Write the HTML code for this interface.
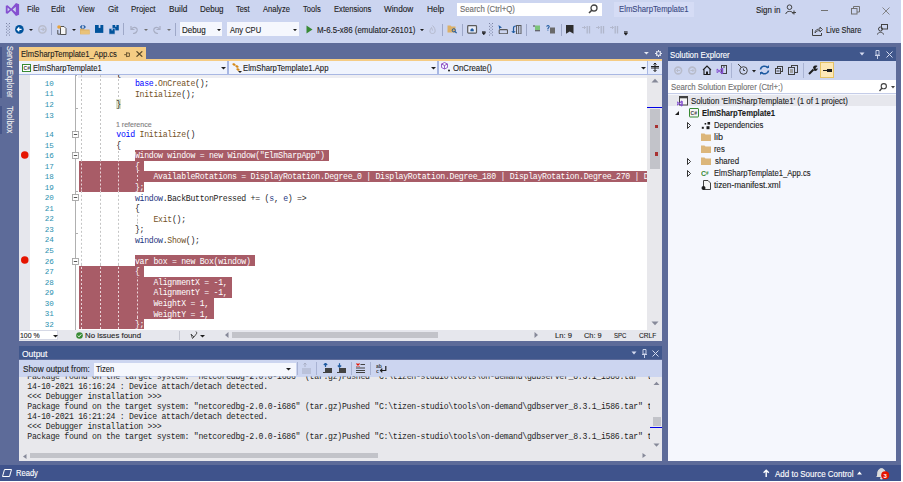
<!DOCTYPE html>
<html><head><meta charset="utf-8"><style>
html,body{margin:0;padding:0;width:903px;height:482px;overflow:hidden;background:#ffffff;}
div,svg{position:absolute;}
div{box-sizing:border-box;}
.t{position:absolute;font-family:"Liberation Sans",sans-serif;white-space:pre;line-height:12px;-webkit-text-stroke:0.12px currentColor;}
.m{position:absolute;font-family:"Liberation Mono",monospace;white-space:pre;line-height:12px;}
</style></head><body>
<div style="left:0px;top:0px;width:901px;height:43px;background:#ccd5f0;"></div>
<div style="left:0px;top:43px;width:901px;height:422px;background:#5d6b99;"></div>
<div style="left:0px;top:465px;width:901px;height:16px;background:#3f538c;"></div>
<svg style="position:absolute;left:0px;top:0px;" width="22" height="20" viewBox="0 0 22 20"><path d="M5.8 5.8 L7.6 5.2 L11.2 8.6 L16 3 L19.1 4.3 V14.7 L16 16 L11.2 10.4 L7.6 13.8 L5.8 13.2 Z M7.6 7.6 V11.4 L9.8 9.5 Z M12.6 9.5 L15.8 12.2 V6.8 Z" fill="#8550d0" fill-rule="evenodd"/></svg>
<div class="t" style="left:26.67px;top:3.22px;font-size:8.9px;color:#1e1e1e;transform-origin:0 0;transform:scaleX(0.8823);">File</div>
<div class="t" style="left:51.36px;top:3.22px;font-size:8.9px;color:#1e1e1e;transform-origin:0 0;transform:scaleX(0.8934);">Edit</div>
<div class="t" style="left:78.46px;top:3.22px;font-size:8.9px;color:#1e1e1e;transform-origin:0 0;transform:scaleX(0.8643);">View</div>
<div class="t" style="left:107.99px;top:3.22px;font-size:8.9px;color:#1e1e1e;transform-origin:0 0;transform:scaleX(0.9118);">Git</div>
<div class="t" style="left:131.27px;top:3.22px;font-size:8.9px;color:#1e1e1e;transform-origin:0 0;transform:scaleX(0.8877);">Project</div>
<div class="t" style="left:168.74px;top:3.22px;font-size:8.9px;color:#1e1e1e;transform-origin:0 0;transform:scaleX(0.9323);">Build</div>
<div class="t" style="left:200.06px;top:3.22px;font-size:8.9px;color:#1e1e1e;transform-origin:0 0;transform:scaleX(0.9013);">Debug</div>
<div class="t" style="left:236.35px;top:3.22px;font-size:8.9px;color:#1e1e1e;transform-origin:0 0;transform:scaleX(0.8341);">Test</div>
<div class="t" style="left:263.30px;top:3.22px;font-size:8.9px;color:#1e1e1e;transform-origin:0 0;transform:scaleX(0.8503);">Analyze</div>
<div class="t" style="left:303.45px;top:3.22px;font-size:8.9px;color:#1e1e1e;transform-origin:0 0;transform:scaleX(0.8526);">Tools</div>
<div class="t" style="left:333.99px;top:3.22px;font-size:8.9px;color:#1e1e1e;transform-origin:0 0;transform:scaleX(0.8612);">Extensions</div>
<div class="t" style="left:384.46px;top:3.22px;font-size:8.9px;color:#1e1e1e;transform-origin:0 0;transform:scaleX(0.9292);">Window</div>
<div class="t" style="left:426.53px;top:3.22px;font-size:8.9px;color:#1e1e1e;transform-origin:0 0;transform:scaleX(0.9407);">Help</div>
<div style="left:457px;top:2.6px;width:144.6px;height:13.5px;background:#ffffff;"></div>
<div class="t" style="left:459.65px;top:3.35px;font-size:8.5px;color:#6d6d6d;transform-origin:0 0;transform:scaleX(0.9181);">Search (Ctrl+Q)</div>
<svg style="position:absolute;left:588px;top:4px;" width="10" height="10" viewBox="0 0 10 10"><circle cx="6" cy="4" r="3" fill="none" stroke="#424242" stroke-width="1.3"/><path d="M4 6 L1 9" stroke="#424242" stroke-width="1.6"/></svg>
<div style="left:614.3px;top:1.7px;width:79.4px;height:15.3px;background:#d5dcf5;"></div>
<div class="t" style="left:618.98px;top:3.35px;font-size:8.5px;color:#3b4a84;transform-origin:0 0;transform:scaleX(0.9102);">ElmSharpTemplate1</div>
<div class="t" style="left:755.84px;top:3.65px;font-size:8.5px;color:#1e1e1e;transform-origin:0 0;transform:scaleX(0.9372);">Sign in</div>
<svg style="position:absolute;left:785px;top:4px;" width="12" height="11" viewBox="0 0 12 11"><circle cx="4.5" cy="3.2" r="2.3" fill="none" stroke="#424242" stroke-width="1"/><path d="M0.8 10 C1 6.5 8 6.5 8.2 10" fill="none" stroke="#424242" stroke-width="1"/><path d="M9 6.5 V10.5 M7 8.5 H11" stroke="#424242" stroke-width="1"/></svg>
<div style="left:821px;top:10px;width:7.4px;height:1px;background:#717171;"></div>
<svg style="position:absolute;left:851px;top:6px;" width="9" height="9" viewBox="0 0 9 9"><rect x="0.5" y="2.5" width="5.5" height="5.5" fill="none" stroke="#717171"/><path d="M2.5 2.5 V0.5 H8.5 V6 H6" fill="none" stroke="#717171"/></svg>
<svg style="position:absolute;left:882px;top:7px;" width="8" height="8" viewBox="0 0 8 8"><path d="M0.5 0.5 L7.5 7.5 M7.5 0.5 L0.5 7.5" stroke="#7a7a7a" stroke-width="0.9"/></svg>
<svg style="position:absolute;left:5.8px;top:23px;" width="4" height="13" viewBox="0 0 4 13"><rect x="0" y="0.00" width="1" height="1" fill="#7c84a4"/><rect x="3" y="0.00" width="1" height="1" fill="#7c84a4"/><rect x="1.5" y="1.45" width="1" height="1" fill="#7c84a4"/><rect x="0" y="2.90" width="1" height="1" fill="#7c84a4"/><rect x="3" y="2.90" width="1" height="1" fill="#7c84a4"/><rect x="1.5" y="4.35" width="1" height="1" fill="#7c84a4"/><rect x="0" y="5.80" width="1" height="1" fill="#7c84a4"/><rect x="3" y="5.80" width="1" height="1" fill="#7c84a4"/><rect x="1.5" y="7.25" width="1" height="1" fill="#7c84a4"/><rect x="0" y="8.70" width="1" height="1" fill="#7c84a4"/><rect x="3" y="8.70" width="1" height="1" fill="#7c84a4"/><rect x="1.5" y="10.15" width="1" height="1" fill="#7c84a4"/><rect x="0" y="11.60" width="1" height="1" fill="#7c84a4"/><rect x="3" y="11.60" width="1" height="1" fill="#7c84a4"/></svg>
<svg style="position:absolute;left:15px;top:25px;" width="9" height="9" viewBox="0 0 9 9"><circle cx="4.4" cy="4.4" r="4.3" fill="#00539c"/><path d="M6.6 4.4 H2.4 M4.3 2.5 L2.4 4.4 L4.3 6.3" fill="none" stroke="#ffffff" stroke-width="1.3"/></svg>
<svg style="position:absolute;left:28.5px;top:28.5px;" width="4" height="2" viewBox="0 0 4 2"><path d="M0 0 H4 L2 2 Z" fill="#1e1e1e"/></svg>
<svg style="position:absolute;left:37.5px;top:25px;" width="9" height="9" viewBox="0 0 9 9"><circle cx="4.4" cy="4.4" r="3.6" fill="none" stroke="#b8bccb" stroke-width="1.6"/><path d="M2.5 4.4 H6.2 M4.6 2.7 L6.3 4.4 L4.6 6.1" fill="none" stroke="#b8bccb" stroke-width="1.1"/></svg>
<div style="left:51px;top:23px;width:0.9px;height:12.4px;background:#9ea8c8;"></div>
<svg style="position:absolute;left:57px;top:24.5px;" width="10" height="10" viewBox="0 0 10 10"><path d="M3.5 1.5 H7 L9 3.5 V9.5 H3.5 Z" fill="#f6f6f6" stroke="#424242" stroke-width="0.9"/><path d="M0.8 5 V9.2 H3.5" fill="none" stroke="#424242" stroke-width="0.9"/><circle cx="2" cy="2" r="1.8" fill="#e8a33d"/></svg>
<svg style="position:absolute;left:71.8px;top:28.6px;" width="4" height="2" viewBox="0 0 4 2"><path d="M0 0 H4 L2 2 Z" fill="#1e1e1e"/></svg>
<svg style="position:absolute;left:80px;top:25px;" width="10" height="10" viewBox="0 0 10 10"><path d="M0 3.5 H3.5 L4.5 4.5 H9.6 V9.2 H0 Z" fill="#dcb067"/><path d="M0.5 5.5 H9.6 V9.2 H0.5 Z" fill="#e9c27a"/><path d="M2.3 0.3 L0.6 2 L2.3 3.7" fill="none" stroke="#1e5aa0" stroke-width="1.1"/><path d="M3.5 0.3 L5.2 2 L3.5 3.7" fill="none" stroke="#1e5aa0" stroke-width="1.1"/></svg>
<svg style="position:absolute;left:95px;top:25.4px;" width="9" height="8" viewBox="0 0 9 8"><path d="M0 0 H8.3 V7.9 H0 Z" fill="#00539c"/><rect x="3.7" y="0" width="1.7" height="2.9" fill="#ccd5f0"/></svg>
<svg style="position:absolute;left:109px;top:24.6px;" width="10" height="10" viewBox="0 0 10 10"><path d="M3.5 0 H9.8 V5.4 H3.5 Z" fill="#00539c"/><path d="M0 3.4 H6 V9.2 H0 Z" fill="#00539c" stroke="#ccd5f0" stroke-width="0.6"/><rect x="6.2" y="0" width="1.2" height="1.8" fill="#ccd5f0"/><rect x="2.5" y="3.6" width="1.2" height="1.8" fill="#ccd5f0"/></svg>
<div style="left:123.2px;top:23px;width:0.9px;height:12.4px;background:#9ea8c8;"></div>
<svg style="position:absolute;left:129px;top:25px;" width="9" height="9" viewBox="0 0 9 9"><path d="M2 1 V4.5 H5.5" fill="none" stroke="#a8aec4" stroke-width="1.2"/><path d="M2.5 4 C5 1 9 2.5 8 6 C7.5 7.5 6 8.5 4 8.5" fill="none" stroke="#a8aec4" stroke-width="1.2"/></svg>
<svg style="position:absolute;left:144px;top:28.6px;" width="4" height="2" viewBox="0 0 4 2"><path d="M0 0 H4 L2 2 Z" fill="#707070"/></svg>
<svg style="position:absolute;left:153px;top:25px;" width="9" height="9" viewBox="0 0 9 9"><path d="M7 1 V4.5 H3.5" fill="none" stroke="#a8aec4" stroke-width="1.2"/><path d="M6.5 4 C4 1 0 2.5 1 6 C1.5 7.5 3 8.5 5 8.5" fill="none" stroke="#a8aec4" stroke-width="1.2"/></svg>
<svg style="position:absolute;left:167px;top:28.6px;" width="4" height="2" viewBox="0 0 4 2"><path d="M0 0 H4 L2 2 Z" fill="#707070"/></svg>
<div style="left:174.8px;top:23px;width:0.9px;height:13px;background:#9ea8c8;"></div>
<div style="left:180px;top:22.3px;width:42px;height:14px;background:#f5f7fd;"></div>
<div class="t" style="left:182.06px;top:23.65px;font-size:8.5px;color:#1e1e1e;transform-origin:0 0;transform:scaleX(0.9479);">Debug</div>
<svg style="position:absolute;left:216.5px;top:28.5px;" width="4" height="2.5" viewBox="0 0 4 2.5"><path d="M0 0 H4 L2 2.2 Z" fill="#1e1e1e"/></svg>
<div style="left:227px;top:22.3px;width:72px;height:14px;background:#f5f7fd;"></div>
<div class="t" style="left:229.70px;top:23.65px;font-size:8.5px;color:#1e1e1e;transform-origin:0 0;transform:scaleX(0.8893);">Any CPU</div>
<svg style="position:absolute;left:292.8px;top:28.5px;" width="4" height="2.5" viewBox="0 0 4 2.5"><path d="M0 0 H4 L2 2.2 Z" fill="#1e1e1e"/></svg>
<svg style="position:absolute;left:306px;top:25px;" width="7" height="9" viewBox="0 0 7 9"><path d="M0.5 0.5 L6.5 4.5 L0.5 8.5 Z" fill="#388a34"/></svg>
<div class="t" style="left:316.97px;top:23.65px;font-size:8.5px;color:#1e1e1e;transform-origin:0 0;transform:scaleX(0.9303);">M-6.5-x86 (emulator-26101)</div>
<svg style="position:absolute;left:419.5px;top:28.5px;" width="4" height="2.5" viewBox="0 0 4 2.5"><path d="M0 0 H4 L2 2.2 Z" fill="#1e1e1e"/></svg>
<svg style="position:absolute;left:429.3px;top:24.5px;" width="7" height="10" viewBox="0 0 7 10"><path d="M3.5 0.5 C5.5 2.5 6.5 4.5 6 7 C5.5 9 1.5 9 1 7 C0.5 5 2 3.5 2.5 2.5 C3 4 3.5 4.5 3.5 5.5" fill="none" stroke="#b4b9cc" stroke-width="1"/></svg>
<div style="left:441.8px;top:23.5px;width:0.9px;height:12.5px;background:#9ea8c8;"></div>
<svg style="position:absolute;left:447px;top:25px;" width="11" height="9" viewBox="0 0 11 9"><path d="M0.5 0.5 H3.5 L4.5 1.5 H8.5 V7.5 H0.5 Z" fill="#dcb067"/><circle cx="6.8" cy="5.3" r="1.6" fill="#dcb067" stroke="#1e5aa0" stroke-width="1"/><path d="M7.9 6.4 L9.6 8.2" stroke="#1e5aa0" stroke-width="1.2"/></svg>
<div style="left:461.5px;top:23.5px;width:0.9px;height:12.5px;background:#9ea8c8;"></div>
<svg style="position:absolute;left:466.8px;top:24.8px;" width="11" height="9" viewBox="0 0 11 9"><rect x="0.7" y="0.7" width="8.8" height="7.4" rx="0.8" fill="#e8ecf8" stroke="#5a5a5a" stroke-width="1.2"/><path d="M3 5.3 L5.1 3 L7.2 5.3 Z" fill="#1e5aa0"/><rect x="3.5" y="4.8" width="3.2" height="1.5" fill="#1e5aa0"/></svg>
<svg style="position:absolute;left:482px;top:31px;" width="4" height="4" viewBox="0 0 4 4"><path d="M0 0.4 H3.6 M0 1.6 H3.6 L1.8 3.8 Z" stroke="#1e1e1e" stroke-width="0.7" fill="#1e1e1e"/></svg>
<svg style="position:absolute;left:489px;top:23px;" width="4" height="13" viewBox="0 0 4 13"><rect x="0" y="0.00" width="1" height="1" fill="#7c84a4"/><rect x="3" y="0.00" width="1" height="1" fill="#7c84a4"/><rect x="1.5" y="1.45" width="1" height="1" fill="#7c84a4"/><rect x="0" y="2.90" width="1" height="1" fill="#7c84a4"/><rect x="3" y="2.90" width="1" height="1" fill="#7c84a4"/><rect x="1.5" y="4.35" width="1" height="1" fill="#7c84a4"/><rect x="0" y="5.80" width="1" height="1" fill="#7c84a4"/><rect x="3" y="5.80" width="1" height="1" fill="#7c84a4"/><rect x="1.5" y="7.25" width="1" height="1" fill="#7c84a4"/><rect x="0" y="8.70" width="1" height="1" fill="#7c84a4"/><rect x="3" y="8.70" width="1" height="1" fill="#7c84a4"/><rect x="1.5" y="10.15" width="1" height="1" fill="#7c84a4"/><rect x="0" y="11.60" width="1" height="1" fill="#7c84a4"/><rect x="3" y="11.60" width="1" height="1" fill="#7c84a4"/></svg>
<svg style="position:absolute;left:497.5px;top:24.5px;" width="10" height="9" viewBox="0 0 10 9"><path d="M0.5 0 L4 2.6 L2.2 3 L1.4 4.6 Z" fill="#1e5aa0"/><rect x="1.2" y="4.6" width="8.3" height="4.2" rx="1" fill="none" stroke="#5a5a5a" stroke-width="1.1"/></svg>
<svg style="position:absolute;left:511px;top:24.5px;" width="11" height="9.5" viewBox="0 0 11 9.5"><path d="M2.5 8 V3 C2.5 1.5 3.5 1 5 1" fill="none" stroke="#1e5aa0" stroke-width="1.2"/><path d="M0.8 6 L2.5 8 L4.2 6" fill="none" stroke="#1e5aa0" stroke-width="1"/><rect x="5.5" y="0.5" width="4.5" height="8.5" fill="none" stroke="#5a5a5a" stroke-width="1"/><path d="M7.7 0.5 V9" stroke="#5a5a5a" stroke-width="1"/></svg>
<div style="left:526px;top:23.5px;width:0.9px;height:12.5px;background:#9ea8c8;"></div>
<svg style="position:absolute;left:532.5px;top:25px;" width="8" height="8" viewBox="0 0 8 8"><rect x="2" y="0.5" width="5" height="4.5" fill="#7cc47a"/><path d="M0 1 H2 M2 5.8 H7" stroke="#424242" stroke-width="1.1"/></svg>
<svg style="position:absolute;left:546px;top:24.5px;" width="10" height="9" viewBox="0 0 10 9"><path d="M0.8 1.8 C0.8 0.2 3.2 0.2 3.2 1.6 C3.2 2.8 1.8 2.8 1.8 4" fill="none" stroke="#1e5aa0" stroke-width="1.1"/><rect x="1.4" y="4.6" width="1" height="1" fill="#1e5aa0"/><rect x="4" y="2.5" width="5" height="6" fill="#6a6a6a"/></svg>
<div style="left:560.5px;top:23.5px;width:0.9px;height:12.5px;background:#9ea8c8;"></div>
<svg style="position:absolute;left:566.3px;top:24.7px;" width="8" height="9" viewBox="0 0 8 9"><path d="M0 0 H7.5 V8.7 L3.75 6.4 L0 8.7 Z" fill="#2d2d2d"/></svg>
<svg style="position:absolute;left:582px;top:24.5px;" width="9" height="9" viewBox="0 0 9 9"><path d="M5.2 1 V8.5 M7.5 1 V8.5" stroke="#b0b6ca" stroke-width="1.3"/><path d="M0 2.5 H3.5 M2 1 L3.5 2.5 L2 4" fill="none" stroke="#b0b6ca" stroke-width="0.9"/></svg>
<svg style="position:absolute;left:596px;top:24.5px;" width="9" height="9" viewBox="0 0 9 9"><path d="M5.2 1 V8.5 M7.5 1 V8.5" stroke="#b0b6ca" stroke-width="1.3"/><path d="M0 2.5 H3.5 M2 1 L3.5 2.5 L2 4" fill="none" stroke="#b0b6ca" stroke-width="0.9"/></svg>
<svg style="position:absolute;left:609.5px;top:24.5px;" width="9" height="9" viewBox="0 0 9 9"><path d="M5.2 1 V8.5 M7.5 1 V8.5" stroke="#b0b6ca" stroke-width="1.3"/><path d="M0 2.5 H3.5 M2 1 L3.5 2.5 L2 4" fill="none" stroke="#b0b6ca" stroke-width="0.9"/></svg>
<svg style="position:absolute;left:624px;top:30.5px;" width="4" height="5" viewBox="0 0 4 5"><path d="M0 0.4 H3.6 M0 1.8 H3.6 L1.8 4.2 Z" stroke="#1e1e1e" stroke-width="0.7" fill="#1e1e1e"/></svg>
<svg style="position:absolute;left:812px;top:26px;" width="11" height="10" viewBox="0 0 11 10"><path d="M0.5 3 V9.5 H9.5 V7" fill="none" stroke="#424242"/><path d="M3 7 C3 4 5 3 8 3 V1 L10.5 3.5 L8 6 V4.5 C6 4.5 4.5 5 3 7 Z" fill="none" stroke="#424242" stroke-width="0.9"/></svg>
<div class="t" style="left:826.01px;top:24.25px;font-size:8.5px;color:#1e1e1e;transform-origin:0 0;transform:scaleX(0.8685);">Live Share</div>
<svg style="position:absolute;left:877px;top:24px;" width="11" height="11" viewBox="0 0 11 11"><rect x="4.5" y="0.5" width="6" height="4.5" fill="none" stroke="#424242"/><circle cx="3.5" cy="5" r="2" fill="none" stroke="#424242"/><path d="M0.5 10.5 C1 7.5 6 7.5 6.5 10.5" fill="none" stroke="#424242"/></svg>
<div style="left:0px;top:46.7px;width:2px;height:51.3px;background:#46568a;"></div>
<div style="left:0px;top:106px;width:2px;height:28px;background:#46568a;"></div>
<div class="t" style="left:14.2px;top:46.36px;font-size:8.9px;color:#f0f0f0;transform-origin:0 0;transform:rotate(90deg) scaleX(0.8366);line-height:9px;">Server Explorer</div>
<div class="t" style="left:14.2px;top:105.84px;font-size:8.9px;color:#f0f0f0;transform-origin:0 0;transform:rotate(90deg) scaleX(0.8883);line-height:9px;">Toolbox</div>
<div style="left:19px;top:47px;width:127px;height:13px;background:#f5cc84;"></div>
<div class="t" style="left:21.39px;top:47.52px;font-size:8.9px;color:#1e1e1e;transform-origin:0 0;transform:scaleX(0.8563);">ElmSharpTemplate1_App.cs</div>
<svg style="position:absolute;left:124px;top:51.5px;" width="7" height="6" viewBox="0 0 7 6"><path d="M0.2 2.7 H2.5 M2.6 0.3 V5.1 M2.6 1 H5.4 V4.4 H2.6" fill="none" stroke="#6b5530" stroke-width="1"/></svg>
<svg style="position:absolute;left:136px;top:51px;" width="7" height="6" viewBox="0 0 7 6"><path d="M0.5 0.3 L6.3 5.7 M6.3 0.3 L0.5 5.7" stroke="#5b4a2a" stroke-width="1.2"/></svg>
<div style="left:19px;top:59px;width:643px;height:1.6px;background:#f5cc84;"></div>
<div style="left:19px;top:60.6px;width:643px;height:13.6px;background:#f0f4fd;"></div>
<div style="left:19px;top:74.1px;width:643px;height:0.9px;background:#a9b8e3;"></div>
<div style="left:227.2px;top:60.6px;width:2px;height:14px;background:#a9b8e3;"></div>
<div style="left:436.9px;top:60.6px;width:2px;height:14px;background:#a9b8e3;"></div>
<div style="left:647px;top:60.6px;width:1px;height:14px;background:#a9b8e3;"></div>
<div style="left:648px;top:60.6px;width:14px;height:13.5px;background:#e4eafb;"></div>
<svg style="position:absolute;left:22px;top:63.5px;" width="9" height="8" viewBox="0 0 9 8"><rect x="0.5" y="0.5" width="8" height="7" fill="#ffffff" stroke="#388a34" stroke-width="1"/><text x="1.6" y="6" font-family="Liberation Sans" font-size="5" font-weight="bold" fill="#424242">C#</text></svg>
<div class="t" style="left:32.69px;top:62.15px;font-size:8.5px;color:#1e1e1e;transform-origin:0 0;transform:scaleX(0.8969);">ElmSharpTemplate1</div>
<svg style="position:absolute;left:221px;top:67px;" width="5" height="3" viewBox="0 0 5 3"><path d="M0 0 H5 L2.5 2.5 Z" fill="#1e1e1e"/></svg>
<svg style="position:absolute;left:231px;top:62.5px;" width="11" height="10" viewBox="0 0 11 10"><path d="M1 1 L3 0 L5 2 L3 3 Z M4 3 L6 2 L8 4 L6 5 Z M5 6 L7 5 L9 7 L7 8 Z" fill="#d68a1a"/><path d="M7 8 L9 10 L11 8 Z" fill="#1e1e1e"/></svg>
<div class="t" style="left:243.28px;top:62.15px;font-size:8.5px;color:#1e1e1e;transform-origin:0 0;transform:scaleX(0.9087);">ElmSharpTemplate1.App</div>
<svg style="position:absolute;left:430.5px;top:67px;" width="5" height="3" viewBox="0 0 5 3"><path d="M0 0 H5 L2.5 2.5 Z" fill="#1e1e1e"/></svg>
<svg style="position:absolute;left:440.5px;top:62px;" width="9" height="10" viewBox="0 0 9 10"><path d="M3.5 0.5 L6.5 2 V5.5 L3.5 7 L0.5 5.5 V2 Z M0.5 2 L3.5 3.5 L6.5 2 M3.5 3.5 V7" fill="none" stroke="#8e4fc2" stroke-width="0.9"/><circle cx="8" cy="8.5" r="1" fill="#1e1e1e"/></svg>
<div class="t" style="left:452.65px;top:62.15px;font-size:8.5px;color:#1e1e1e;transform-origin:0 0;transform:scaleX(0.9133);">OnCreate()</div>
<svg style="position:absolute;left:641px;top:67px;" width="5" height="3" viewBox="0 0 5 3"><path d="M0 0 H5 L2.5 2.5 Z" fill="#1e1e1e"/></svg>
<svg style="position:absolute;left:651px;top:63px;" width="8" height="9" viewBox="0 0 8 9"><path d="M0 3.5 H8 M0 5 H8" stroke="#1e1e1e" stroke-width="1"/><path d="M4 0 V8.5 M2.5 1.5 L4 0 L5.5 1.5 M2.5 7 L4 8.5 L5.5 7" fill="none" stroke="#1e1e1e" stroke-width="1"/></svg>
<div style="left:19px;top:75px;width:628px;height:254.6px;background:#ffffff;"></div>
<div style="left:19px;top:75px;width:10.6px;height:254.6px;background:#e6e7ed;"></div>
<div style="left:78px;top:75px;width:569px;height:3px;background:#eeeef2;"></div>
<div style="left:75.3px;top:75px;width:0.9px;height:56.19999999999999px;background:#b0b0b0;"></div>
<div style="left:75.3px;top:75px;width:2px;height:0.9px;background:#b0b0b0;"></div>
<div style="left:134.9px;top:149.99px;width:194.59px;height:10.595px;background:#a85c67;"></div>
<div style="left:78.8px;top:160.53px;width:65.36px;height:10.595px;background:#a85c67;"></div>
<div style="left:78.8px;top:171.08px;width:568.2px;height:10.595px;background:#a85c67;"></div>
<div style="left:78.8px;top:181.62px;width:65.36px;height:10.595px;background:#a85c67;"></div>
<div style="left:134.9px;top:255.44px;width:120.46px;height:10.595px;background:#a85c67;"></div>
<div style="left:78.8px;top:265.99px;width:65.36px;height:10.595px;background:#a85c67;"></div>
<div style="left:78.8px;top:276.53px;width:153.39px;height:10.595px;background:#a85c67;"></div>
<div style="left:78.8px;top:287.08px;width:153.39px;height:10.595px;background:#a85c67;"></div>
<div style="left:78.8px;top:297.62px;width:134.86px;height:10.595px;background:#a85c67;"></div>
<div style="left:78.8px;top:308.16px;width:134.86px;height:10.595px;background:#a85c67;"></div>
<div style="left:78.8px;top:318.71px;width:65.36px;height:10.595px;background:#a85c67;"></div>
<div style="left:116px;top:99px;width:5px;height:10.2px;background:#dbe0cc;"></div>
<div style="left:81px;top:75px;width:1px;height:85.53px;background:repeating-linear-gradient(to bottom,#c4c4c4 0 2px,transparent 2px 4px);background-position:0 0.00px;"></div>
<div style="left:81px;top:160.53px;width:1px;height:31.64px;background:repeating-linear-gradient(to bottom,#ecd6da 0 2px,transparent 2px 4px);background-position:0 -1.53px;"></div>
<div style="left:81px;top:192.17px;width:1px;height:73.82px;background:repeating-linear-gradient(to bottom,#c4c4c4 0 2px,transparent 2px 4px);background-position:0 -1.17px;"></div>
<div style="left:81px;top:265.99px;width:1px;height:63.61px;background:repeating-linear-gradient(to bottom,#ecd6da 0 2px,transparent 2px 4px);background-position:0 -2.99px;"></div>
<div style="left:100px;top:75px;width:1px;height:85.53px;background:repeating-linear-gradient(to bottom,#c4c4c4 0 2px,transparent 2px 4px);background-position:0 0.00px;"></div>
<div style="left:100px;top:160.53px;width:1px;height:31.64px;background:repeating-linear-gradient(to bottom,#ecd6da 0 2px,transparent 2px 4px);background-position:0 -1.53px;"></div>
<div style="left:100px;top:192.17px;width:1px;height:73.82px;background:repeating-linear-gradient(to bottom,#c4c4c4 0 2px,transparent 2px 4px);background-position:0 -1.17px;"></div>
<div style="left:100px;top:265.99px;width:1px;height:63.61px;background:repeating-linear-gradient(to bottom,#ecd6da 0 2px,transparent 2px 4px);background-position:0 -2.99px;"></div>
<div style="left:118px;top:75px;width:1px;height:23.89px;background:repeating-linear-gradient(to bottom,#c4c4c4 0 2px,transparent 2px 4px);background-position:0 0.00px;"></div>
<div style="left:118px;top:149.99px;width:1px;height:10.54px;background:repeating-linear-gradient(to bottom,#c4c4c4 0 2px,transparent 2px 4px);background-position:0 -2.99px;"></div>
<div style="left:118px;top:160.53px;width:1px;height:31.64px;background:repeating-linear-gradient(to bottom,#ecd6da 0 2px,transparent 2px 4px);background-position:0 -1.53px;"></div>
<div style="left:118px;top:192.17px;width:1px;height:73.82px;background:repeating-linear-gradient(to bottom,#c4c4c4 0 2px,transparent 2px 4px);background-position:0 -1.17px;"></div>
<div style="left:118px;top:265.99px;width:1px;height:63.61px;background:repeating-linear-gradient(to bottom,#ecd6da 0 2px,transparent 2px 4px);background-position:0 -2.99px;"></div>
<div style="left:137px;top:171.08px;width:1px;height:10.54px;background:repeating-linear-gradient(to bottom,#ecd6da 0 2px,transparent 2px 4px);background-position:0 -0.08px;"></div>
<div style="left:137px;top:213.26px;width:1px;height:10.55px;background:repeating-linear-gradient(to bottom,#c4c4c4 0 2px,transparent 2px 4px);background-position:0 -2.26px;"></div>
<div style="left:137px;top:276.53px;width:1px;height:42.18px;background:repeating-linear-gradient(to bottom,#ecd6da 0 2px,transparent 2px 4px);background-position:0 -1.53px;"></div>
<div style="left:0;top:0;width:903px;height:482px;clip-path:inset(75px 256px 152.4px 19px)">
<div class="m" style="left:116.36px;top:67.66px;font-size:8.2px;letter-spacing:-0.287px;color:#1e1e1e;">{</div>
<div class="m" style="left:134.90px;top:78.21px;font-size:8.2px;letter-spacing:-0.287px;color:#0000ff;">base</div>
<div class="m" style="left:153.43px;top:78.21px;font-size:8.2px;letter-spacing:-0.287px;color:#1e1e1e;">.</div>
<div class="m" style="left:158.06px;top:78.21px;font-size:8.2px;letter-spacing:-0.287px;color:#74531f;">OnCreate</div>
<div class="m" style="left:195.12px;top:78.21px;font-size:8.2px;letter-spacing:-0.287px;color:#1e1e1e;">();</div>
<div class="m" style="left:134.90px;top:88.75px;font-size:8.2px;letter-spacing:-0.287px;color:#74531f;">Initialize</div>
<div class="m" style="left:181.23px;top:88.75px;font-size:8.2px;letter-spacing:-0.287px;color:#1e1e1e;">();</div>
<div class="m" style="left:116.36px;top:99.30px;font-size:8.2px;letter-spacing:-0.287px;color:#1e1e1e;">}</div>
<div class="m" style="left:116.36px;top:129.31px;font-size:8.2px;letter-spacing:-0.287px;color:#0000ff;">void</div>
<div class="m" style="left:139.53px;top:129.31px;font-size:8.2px;letter-spacing:-0.287px;color:#74531f;">Initialize</div>
<div class="m" style="left:185.86px;top:129.31px;font-size:8.2px;letter-spacing:-0.287px;color:#1e1e1e;">()</div>
<div class="m" style="left:116.36px;top:139.85px;font-size:8.2px;letter-spacing:-0.287px;color:#1e1e1e;">{</div>
<div class="m" style="left:134.90px;top:150.40px;font-size:8.2px;letter-spacing:-0.287px;color:#fff;">Window window = new Window(&quot;ElmSharpApp&quot;)</div>
<div class="m" style="left:134.90px;top:160.94px;font-size:8.2px;letter-spacing:-0.287px;color:#fff;">{</div>
<div class="m" style="left:153.43px;top:171.49px;font-size:8.2px;letter-spacing:-0.287px;color:#fff;">AvailableRotations = DisplayRotation.Degree_0 | DisplayRotation.Degree_180 | DisplayRotation.Degree_270 | DisplayRotation.Degree_90</div>
<div class="m" style="left:134.90px;top:182.03px;font-size:8.2px;letter-spacing:-0.287px;color:#fff;">};</div>
<div class="m" style="left:134.90px;top:192.58px;font-size:8.2px;letter-spacing:-0.287px;color:#1f377f;">window</div>
<div class="m" style="left:162.69px;top:192.58px;font-size:8.2px;letter-spacing:-0.287px;color:#1e1e1e;">.BackButtonPressed += (</div>
<div class="m" style="left:269.25px;top:192.58px;font-size:8.2px;letter-spacing:-0.287px;color:#1f377f;">s</div>
<div class="m" style="left:273.89px;top:192.58px;font-size:8.2px;letter-spacing:-0.287px;color:#1e1e1e;">, </div>
<div class="m" style="left:283.15px;top:192.58px;font-size:8.2px;letter-spacing:-0.287px;color:#1f377f;">e</div>
<div class="m" style="left:287.79px;top:192.58px;font-size:8.2px;letter-spacing:-0.287px;color:#1e1e1e;">) =&gt;</div>
<div class="m" style="left:134.90px;top:203.12px;font-size:8.2px;letter-spacing:-0.287px;color:#1e1e1e;">{</div>
<div class="m" style="left:153.43px;top:213.67px;font-size:8.2px;letter-spacing:-0.287px;color:#74531f;">Exit</div>
<div class="m" style="left:171.96px;top:213.67px;font-size:8.2px;letter-spacing:-0.287px;color:#1e1e1e;">();</div>
<div class="m" style="left:134.90px;top:224.22px;font-size:8.2px;letter-spacing:-0.287px;color:#1e1e1e;">};</div>
<div class="m" style="left:134.90px;top:234.76px;font-size:8.2px;letter-spacing:-0.287px;color:#1f377f;">window</div>
<div class="m" style="left:162.69px;top:234.76px;font-size:8.2px;letter-spacing:-0.287px;color:#1e1e1e;">.</div>
<div class="m" style="left:167.33px;top:234.76px;font-size:8.2px;letter-spacing:-0.287px;color:#74531f;">Show</div>
<div class="m" style="left:185.86px;top:234.76px;font-size:8.2px;letter-spacing:-0.287px;color:#1e1e1e;">();</div>
<div class="m" style="left:134.90px;top:255.85px;font-size:8.2px;letter-spacing:-0.287px;color:#fff;">var box = new Box(window)</div>
<div class="m" style="left:134.90px;top:266.40px;font-size:8.2px;letter-spacing:-0.287px;color:#fff;">{</div>
<div class="m" style="left:153.43px;top:276.94px;font-size:8.2px;letter-spacing:-0.287px;color:#fff;">AlignmentX = -1,</div>
<div class="m" style="left:153.43px;top:287.49px;font-size:8.2px;letter-spacing:-0.287px;color:#fff;">AlignmentY = -1,</div>
<div class="m" style="left:153.43px;top:298.03px;font-size:8.2px;letter-spacing:-0.287px;color:#fff;">WeightX = 1,</div>
<div class="m" style="left:153.43px;top:308.57px;font-size:8.2px;letter-spacing:-0.287px;color:#fff;">WeightY = 1,</div>
<div class="m" style="left:134.90px;top:319.12px;font-size:8.2px;letter-spacing:-0.287px;color:#fff;">};</div>
</div>
<div class="t" style="left:116.17px;top:118.74px;font-size:6.8px;color:#808080;transform-origin:0 0;transform:scaleX(1.0349);">1 reference</div>
<div class="m" style="left:44.7px;top:77.90px;font-size:7.6px;letter-spacing:0.073px;color:#2b91af;">10</div>
<div class="m" style="left:44.7px;top:88.44px;font-size:7.6px;letter-spacing:0.073px;color:#2b91af;">11</div>
<div class="m" style="left:44.7px;top:98.99px;font-size:7.6px;letter-spacing:0.073px;color:#2b91af;">12</div>
<div class="m" style="left:44.7px;top:109.53px;font-size:7.6px;letter-spacing:0.073px;color:#2b91af;">13</div>
<div class="m" style="left:44.7px;top:129.00px;font-size:7.6px;letter-spacing:0.073px;color:#2b91af;">14</div>
<div class="m" style="left:44.7px;top:139.54px;font-size:7.6px;letter-spacing:0.073px;color:#2b91af;">15</div>
<div class="m" style="left:44.7px;top:150.09px;font-size:7.6px;letter-spacing:0.073px;color:#2b91af;">16</div>
<div class="m" style="left:44.7px;top:160.63px;font-size:7.6px;letter-spacing:0.073px;color:#2b91af;">17</div>
<div class="m" style="left:44.7px;top:171.18px;font-size:7.6px;letter-spacing:0.073px;color:#2b91af;">18</div>
<div class="m" style="left:44.7px;top:181.72px;font-size:7.6px;letter-spacing:0.073px;color:#2b91af;">19</div>
<div class="m" style="left:44.7px;top:192.27px;font-size:7.6px;letter-spacing:0.073px;color:#2b91af;">20</div>
<div class="m" style="left:44.7px;top:202.81px;font-size:7.6px;letter-spacing:0.073px;color:#2b91af;">21</div>
<div class="m" style="left:44.7px;top:213.36px;font-size:7.6px;letter-spacing:0.073px;color:#2b91af;">22</div>
<div class="m" style="left:44.7px;top:223.91px;font-size:7.6px;letter-spacing:0.073px;color:#2b91af;">23</div>
<div class="m" style="left:44.7px;top:234.45px;font-size:7.6px;letter-spacing:0.073px;color:#2b91af;">24</div>
<div class="m" style="left:44.7px;top:245.00px;font-size:7.6px;letter-spacing:0.073px;color:#2b91af;">25</div>
<div class="m" style="left:44.7px;top:255.54px;font-size:7.6px;letter-spacing:0.073px;color:#2b91af;">26</div>
<div class="m" style="left:44.7px;top:266.09px;font-size:7.6px;letter-spacing:0.073px;color:#2b91af;">27</div>
<div class="m" style="left:44.7px;top:276.63px;font-size:7.6px;letter-spacing:0.073px;color:#2b91af;">28</div>
<div class="m" style="left:44.7px;top:287.18px;font-size:7.6px;letter-spacing:0.073px;color:#2b91af;">29</div>
<div class="m" style="left:44.7px;top:297.72px;font-size:7.6px;letter-spacing:0.073px;color:#2b91af;">30</div>
<div class="m" style="left:44.7px;top:308.26px;font-size:7.6px;letter-spacing:0.073px;color:#2b91af;">31</div>
<div class="m" style="left:44.7px;top:318.81px;font-size:7.6px;letter-spacing:0.073px;color:#2b91af;">32</div>
<div style="left:75.3px;top:137.97250000000003px;width:0.9px;height:191.6275px;background:#b0b0b0;"></div>
<svg style="position:absolute;left:72px;top:130.97px;" width="7" height="7" viewBox="0 0 7 7"><rect x="0.5" y="0.5" width="6" height="6" fill="#ffffff" stroke="#a5a5a5" stroke-width="0.9"/><path d="M1.8 3.5 H5.2" stroke="#424242" stroke-width="0.9"/></svg>
<svg style="position:absolute;left:72px;top:152.06px;" width="7" height="7" viewBox="0 0 7 7"><rect x="0.5" y="0.5" width="6" height="6" fill="#ffffff" stroke="#a5a5a5" stroke-width="0.9"/><path d="M1.8 3.5 H5.2" stroke="#424242" stroke-width="0.9"/></svg>
<svg style="position:absolute;left:72px;top:194.24px;" width="7" height="7" viewBox="0 0 7 7"><rect x="0.5" y="0.5" width="6" height="6" fill="#ffffff" stroke="#a5a5a5" stroke-width="0.9"/><path d="M1.8 3.5 H5.2" stroke="#424242" stroke-width="0.9"/></svg>
<svg style="position:absolute;left:72px;top:257.51px;" width="7" height="7" viewBox="0 0 7 7"><rect x="0.5" y="0.5" width="6" height="6" fill="#ffffff" stroke="#a5a5a5" stroke-width="0.9"/><path d="M1.8 3.5 H5.2" stroke="#424242" stroke-width="0.9"/></svg>
<div style="left:75.3px;top:107.935px;width:2.5px;height:0.9px;background:#b0b0b0;"></div>
<div style="left:75.3px;top:190.67px;width:2.5px;height:0.9px;background:#b0b0b0;"></div>
<div style="left:75.3px;top:232.85px;width:2.5px;height:0.9px;background:#b0b0b0;"></div>
<svg style="position:absolute;left:20px;top:149.86px;" width="10" height="10" viewBox="0 0 10 10"><circle cx="4.75" cy="5" r="3.75" fill="#e51400"/></svg>
<svg style="position:absolute;left:20px;top:255.31px;" width="10" height="10" viewBox="0 0 10 10"><circle cx="4.75" cy="5" r="3.75" fill="#e51400"/></svg>
<div style="left:647px;top:75px;width:15px;height:254.6px;background:#e8e8ec;"></div>
<svg style="position:absolute;left:651px;top:78px;" width="8" height="5" viewBox="0 0 8 5"><path d="M0.5 4.5 L4 0.8 L7.5 4.5 Z" fill="#868999"/></svg>
<svg style="position:absolute;left:651px;top:320.5px;" width="8" height="5" viewBox="0 0 8 5"><path d="M0.5 0.5 L4 4.2 L7.5 0.5 Z" fill="#868999"/></svg>
<div style="left:650px;top:108.9px;width:10px;height:60.6px;background:#c2c3c9;"></div>
<div style="left:647px;top:106.6px;width:15px;height:1.3px;background:#0000e6;"></div>
<div style="left:655.2px;top:124.8px;width:3.3px;height:3.7px;background:#a83232;"></div>
<div style="left:655.2px;top:152px;width:3.3px;height:3.7px;background:#a83232;"></div>
<div style="left:19px;top:329.6px;width:643px;height:11.1px;background:#e6e7ed;"></div>
<div style="left:19.3px;top:330.3px;width:39px;height:10.2px;background:#ffffff;border:1px solid #d6d9e6;"></div>
<div class="t" style="left:20.48px;top:330.29px;font-size:8.1px;color:#1e1e1e;transform-origin:0 0;transform:scaleX(0.8608);">100 %</div>
<svg style="position:absolute;left:53px;top:335px;" width="5" height="3" viewBox="0 0 5 3"><path d="M0 0 H5 L2.5 2.5 Z" fill="#1e1e1e"/></svg>
<svg style="position:absolute;left:75.5px;top:332.2px;" width="7" height="7" viewBox="0 0 7 7"><circle cx="3.5" cy="3.5" r="3.3" fill="#388a34"/><path d="M1.8 3.6 L3 4.8 L5.3 2.3" fill="none" stroke="#fff" stroke-width="1"/></svg>
<div class="t" style="left:84.77px;top:330.29px;font-size:8.1px;color:#1e1e1e;transform-origin:0 0;transform:scaleX(0.9659);">No issues found</div>
<div style="left:179px;top:331px;width:0.9px;height:9px;background:#c4c6d0;"></div>
<svg style="position:absolute;left:189.5px;top:331px;" width="9" height="8" viewBox="0 0 9 8"><path d="M1 3 L4 6 L7 2 L6 0.5 M1 3 L2.5 7.5 L4 6" fill="none" stroke="#424242" stroke-width="0.9"/></svg>
<svg style="position:absolute;left:200.4px;top:334.5px;" width="5" height="3" viewBox="0 0 5 3"><path d="M0 0 H5 L2.5 2.5 Z" fill="#1e1e1e"/></svg>
<svg style="position:absolute;left:225px;top:332px;" width="4" height="6" viewBox="0 0 4 6"><path d="M3.5 0 V6 L0 3 Z" fill="#868999"/></svg>
<div style="left:232px;top:332.3px;width:206px;height:6px;background:#c2c3c9;"></div>
<svg style="position:absolute;left:533.5px;top:332px;" width="4" height="6" viewBox="0 0 4 6"><path d="M0.5 0 V6 L4 3 Z" fill="#868999"/></svg>
<div class="t" style="left:555.09px;top:330.29px;font-size:8.1px;color:#1e1e1e;transform-origin:0 0;transform:scaleX(0.9465);">Ln: 9</div>
<div class="t" style="left:583.63px;top:330.29px;font-size:8.1px;color:#1e1e1e;transform-origin:0 0;transform:scaleX(0.9091);">Ch: 9</div>
<div class="t" style="left:613.63px;top:330.29px;font-size:8.1px;color:#1e1e1e;transform-origin:0 0;transform:scaleX(0.7439);">SPC</div>
<div class="t" style="left:638.97px;top:330.29px;font-size:8.1px;color:#1e1e1e;transform-origin:0 0;transform:scaleX(0.8132);">CRLF</div>
<svg style="position:absolute;left:644px;top:52.3px;" width="5" height="3" viewBox="0 0 5 3"><path d="M0 0 H4.8 L2.4 2.4 Z" fill="#e4e8f4"/></svg>
<svg style="position:absolute;left:655px;top:49.5px;" width="7" height="7" viewBox="0 0 7 7"><circle cx="3.5" cy="3.5" r="2" fill="none" stroke="#e4e8f4" stroke-width="1.2"/><path d="M3.5 0 V1.2 M3.5 5.8 V7 M0 3.5 H1.2 M5.8 3.5 H7 M1 1 L1.8 1.8 M5.2 5.2 L6 6 M6 1 L5.2 1.8 M1.8 5.2 L1 6" stroke="#e4e8f4" stroke-width="1"/></svg>
<div style="left:19px;top:346.3px;width:643px;height:13.2px;background:#40578c;"></div>
<div class="t" style="left:21.52px;top:347.65px;font-size:8.5px;color:#ffffff;transform-origin:0 0;transform:scaleX(0.9970);">Output</div>
<svg style="position:absolute;left:631px;top:351px;" width="6" height="4" viewBox="0 0 6 4"><path d="M0.5 0.5 H5.5 L3 3.5 Z" fill="#d5dbef"/></svg>
<svg style="position:absolute;left:641.5px;top:349px;" width="5" height="9" viewBox="0 0 5 9"><path d="M1 0.5 H4 V5 H1 Z M0 5.5 H5 M2.5 5.5 V9" fill="none" stroke="#d5dbef" stroke-width="0.9"/></svg>
<svg style="position:absolute;left:652px;top:349.5px;" width="7" height="7" viewBox="0 0 7 7"><path d="M0.5 0.5 L6.5 6.5 M6.5 0.5 L0.5 6.5" stroke="#d5dbef" stroke-width="1"/></svg>
<div style="left:19px;top:359.5px;width:643px;height:17px;background:#ccd5f0;"></div>
<div class="t" style="left:23.23px;top:363.35px;font-size:8.5px;color:#1e1e1e;transform-origin:0 0;transform:scaleX(0.9695);">Show output from:</div>
<div style="left:94px;top:362.6px;width:201.7px;height:13px;background:#f5f7fd;"></div>
<div class="t" style="left:96.15px;top:363.35px;font-size:8.5px;color:#1e1e1e;transform-origin:0 0;transform:scaleX(0.8956);">Tizen</div>
<svg style="position:absolute;left:285.5px;top:368px;" width="5" height="3" viewBox="0 0 5 3"><path d="M0 0 H5 L2.5 2.5 Z" fill="#1e1e1e"/></svg>
<div style="left:297px;top:362px;width:0.9px;height:13px;background:#a9b3d3;"></div>
<svg style="position:absolute;left:302px;top:363px;" width="10" height="11" viewBox="0 0 10 11"><path d="M3 0 V4 M1.5 1.5 L3 0 L4.5 1.5" fill="none" stroke="#a8aec4"/><path d="M0 6 H9 M0 8 H9 M0 10 H9" stroke="#a8aec4"/></svg>
<div style="left:316.4px;top:362px;width:0.9px;height:13px;background:#a9b3d3;"></div>
<svg style="position:absolute;left:322.5px;top:363px;" width="9" height="10" viewBox="0 0 9 10"><path d="M2.5 4 V0.5 M0.8 2 L2.5 0.3 L4.2 2" fill="none" stroke="#1e5aa0" stroke-width="1.2"/><rect x="2" y="5" width="7" height="4.5" fill="#424242"/><path d="M0 9.5 H9" stroke="#424242"/></svg>
<svg style="position:absolute;left:336.5px;top:363px;" width="9" height="10" viewBox="0 0 9 10"><path d="M2.5 0.3 V4 M0.8 2.5 L2.5 4.2 L4.2 2.5" fill="none" stroke="#1e5aa0" stroke-width="1.2"/><rect x="2" y="5" width="7" height="4.5" fill="#424242"/><path d="M0 9.5 H9" stroke="#424242"/></svg>
<div style="left:350.5px;top:362px;width:0.9px;height:13px;background:#a9b3d3;"></div>
<svg style="position:absolute;left:356px;top:363px;" width="9" height="10" viewBox="0 0 9 10"><path d="M0.5 0.5 L3.5 3.5 M3.5 0.5 L0.5 3.5" stroke="#e51400" stroke-width="1.1"/><path d="M4.5 1.5 H9 M0 5 H9 M0 7.5 H9 M0 9.5 H9" stroke="#424242" stroke-width="1"/></svg>
<div style="left:370.4px;top:362px;width:0.9px;height:13px;background:#a9b3d3;"></div>
<svg style="position:absolute;left:375.8px;top:362.5px;" width="11" height="11" viewBox="0 0 11 11"><text x="0" y="4.5" font-family="Liberation Sans" font-size="5" font-weight="bold" fill="#424242">ab</text><text x="0" y="9.5" font-family="Liberation Sans" font-size="5" font-weight="bold" fill="#424242">c</text><path d="M9.8 3 V7.5 H4.5 M6.3 5.7 L4.5 7.5 L6.3 9.3" fill="none" stroke="#1e1e1e" stroke-width="1.2"/></svg>
<div style="left:19px;top:376.5px;width:643px;height:84px;background:#e8e8ec;"></div>
<div style="left:0;top:0;width:903px;height:482px;clip-path:inset(376.5px 252px 21.5px 19px)">
<div class="m" style="left:27.3px;top:370.81px;font-size:8.2px;letter-spacing:-0.287px;color:#1e1e1e;">Package found on the target system: &quot;netcoredbg-2.0.0-i686&quot; (tar.gz)Pushed &quot;C:\tizen-studio\tools\on-demand\gdbserver_8.3.1_i586.tar&quot; to</div>
<div class="m" style="left:27.3px;top:380.81px;font-size:8.2px;letter-spacing:-0.287px;color:#1e1e1e;">14-10-2021 16:16:24 : Device attach/detach detected.</div>
<div class="m" style="left:27.3px;top:390.81px;font-size:8.2px;letter-spacing:-0.287px;color:#1e1e1e;">&lt;&lt;&lt; Debugger installation &gt;&gt;&gt;</div>
<div class="m" style="left:27.3px;top:400.81px;font-size:8.2px;letter-spacing:-0.287px;color:#1e1e1e;">Package found on the target system: &quot;netcoredbg-2.0.0-i686&quot; (tar.gz)Pushed &quot;C:\tizen-studio\tools\on-demand\gdbserver_8.3.1_i586.tar&quot; to</div>
<div class="m" style="left:27.3px;top:410.81px;font-size:8.2px;letter-spacing:-0.287px;color:#1e1e1e;">14-10-2021 16:21:24 : Device attach/detach detected.</div>
<div class="m" style="left:27.3px;top:420.81px;font-size:8.2px;letter-spacing:-0.287px;color:#1e1e1e;">&lt;&lt;&lt; Debugger installation &gt;&gt;&gt;</div>
<div class="m" style="left:27.3px;top:430.81px;font-size:8.2px;letter-spacing:-0.287px;color:#1e1e1e;">Package found on the target system: &quot;netcoredbg-2.0.0-i686&quot; (tar.gz)Pushed &quot;C:\tizen-studio\tools\on-demand\gdbserver_8.3.1_i586.tar&quot; to</div>
</div>
<div style="left:650px;top:376.5px;width:12px;height:72px;background:#e8e8ec;"></div>
<svg style="position:absolute;left:652.5px;top:381px;" width="7" height="5" viewBox="0 0 7 5"><path d="M0.5 4 L3.5 0.8 L6.5 4 Z" fill="#868999"/></svg>
<svg style="position:absolute;left:652.5px;top:442.5px;" width="7" height="5" viewBox="0 0 7 5"><path d="M0.5 0.5 L3.5 3.7 L6.5 0.5 Z" fill="#868999"/></svg>
<div style="left:652.5px;top:416.8px;width:8px;height:9.5px;background:#c2c3c9;"></div>
<div style="left:650px;top:426.5px;width:12px;height:1.2px;background:#0000e6;"></div>
<svg style="position:absolute;left:23px;top:453.5px;" width="4" height="5" viewBox="0 0 4 5"><path d="M3.5 0 V5 L0 2.5 Z" fill="#868999"/></svg>
<div style="left:30px;top:453.3px;width:348px;height:4.3px;background:#c2c3c9;"></div>
<svg style="position:absolute;left:641.5px;top:453px;" width="4" height="5" viewBox="0 0 4 5"><path d="M0.5 0 V5 L4 2.5 Z" fill="#868999"/></svg>
<div style="left:668px;top:47.3px;width:228px;height:413.4px;background:#f5f7fd;"></div>
<div style="left:668px;top:47.3px;width:228px;height:13.3px;background:#40578c;"></div>
<div class="t" style="left:670.25px;top:48.55px;font-size:8.5px;color:#ffffff;transform-origin:0 0;transform:scaleX(0.9228);">Solution Explorer</div>
<svg style="position:absolute;left:859px;top:52px;" width="6" height="4" viewBox="0 0 6 4"><path d="M0.5 0.5 H5.5 L3 3.5 Z" fill="#d5dbef"/></svg>
<svg style="position:absolute;left:875px;top:50px;" width="5" height="9" viewBox="0 0 5 9"><path d="M1 0.5 H4 V5 H1 Z M0 5.5 H5 M2.5 5.5 V9" fill="none" stroke="#d5dbef" stroke-width="0.9"/></svg>
<svg style="position:absolute;left:886px;top:50.5px;" width="7" height="7" viewBox="0 0 7 7"><path d="M0.5 0.5 L6.5 6.5 M6.5 0.5 L0.5 6.5" stroke="#d5dbef" stroke-width="1"/></svg>
<div style="left:668px;top:60.6px;width:228px;height:19.4px;background:#ccd5f0;"></div>
<svg style="position:absolute;left:673.5px;top:66px;" width="9" height="9" viewBox="0 0 9 9"><circle cx="4.2" cy="4.5" r="3.4" fill="none" stroke="#b8bccb" stroke-width="1.6"/><path d="M6 4.5 H2.6 M4 3 L2.5 4.5 L4 6" fill="none" stroke="#b8bccb"/></svg>
<svg style="position:absolute;left:688px;top:66px;" width="9" height="9" viewBox="0 0 9 9"><circle cx="4.2" cy="4.5" r="3.4" fill="none" stroke="#b8bccb" stroke-width="1.6"/><path d="M2.4 4.5 H5.8 M4.4 3 L5.9 4.5 L4.4 6" fill="none" stroke="#b8bccb"/></svg>
<svg style="position:absolute;left:702px;top:65px;" width="10" height="10" viewBox="0 0 10 10"><path d="M1 5 L5 1 L9 5 M2 4.5 V9.5 H8 V4.5" fill="none" stroke="#1e1e1e" stroke-width="1.1"/><rect x="4" y="6.5" width="2" height="3" fill="#1e1e1e"/></svg>
<svg style="position:absolute;left:716px;top:64.5px;" width="11" height="11" viewBox="0 0 11 11"><rect x="5.5" y="0.5" width="5" height="8" fill="none" stroke="#424242"/><path d="M7 2 H9" stroke="#424242"/><path transform="translate(-2.3,1.2) scale(0.5)" d="M5.8 5.8 L7.6 5.2 L11.2 8.6 L16 3 L19.1 4.3 V14.7 L16 16 L11.2 10.4 L7.6 13.8 L5.8 13.2 Z M7.6 7.6 V11.4 L9.8 9.5 Z M12.6 9.5 L15.8 12.2 V6.8 Z" fill="#8550d0" fill-rule="evenodd"/></svg>
<div style="left:730.5px;top:63px;width:0.9px;height:15px;background:#a9b3d3;"></div>
<svg style="position:absolute;left:737.5px;top:64px;" width="10" height="11" viewBox="0 0 10 11"><circle cx="5.5" cy="6.5" r="3.8" fill="none" stroke="#424242"/><path d="M5.5 4.5 V6.5 H7" fill="none" stroke="#424242"/><path d="M0 0 L3 3" stroke="#424242"/></svg>
<svg style="position:absolute;left:751.5px;top:70px;" width="4" height="3" viewBox="0 0 4 3"><path d="M0 0 H4 L2 2.5 Z" fill="#1e1e1e"/></svg>
<svg style="position:absolute;left:759px;top:65px;" width="11" height="10" viewBox="0 0 11 10"><path d="M1.5 4.5 C2 1 7 0 9 3 M9.5 5.5 C9 9 4 10 2 7" fill="none" stroke="#1e5aa0" stroke-width="1.6"/><path d="M7 3 H10 V0 Z M4 7 H1 V10 Z" fill="#1e5aa0"/></svg>
<svg style="position:absolute;left:775px;top:66px;" width="8" height="8" viewBox="0 0 8 8"><rect x="2.5" y="0.5" width="5" height="5" fill="none" stroke="#424242"/><rect x="0.5" y="2.5" width="5" height="5" fill="#ccd5f0" stroke="#424242"/><path d="M1.5 5 H4.5" stroke="#424242"/></svg>
<svg style="position:absolute;left:788px;top:65px;" width="10" height="10" viewBox="0 0 10 10"><rect x="3.5" y="0.5" width="6" height="7" fill="none" stroke="#424242"/><rect x="0.5" y="2.5" width="6" height="7" fill="#ccd5f0" stroke="#424242"/><rect x="2" y="4" width="3" height="4" fill="#a0a0a0"/></svg>
<div style="left:802.5px;top:63px;width:0.9px;height:15px;background:#a9b3d3;"></div>
<svg style="position:absolute;left:808px;top:65px;" width="10" height="10" viewBox="0 0 10 10"><path d="M1 9 L5.5 4.5" stroke="#1e1e1e" stroke-width="2"/><path d="M5 2.5 C5.5 0.5 8 0 9.5 1 L7.5 3 L8 4 L9.5 3 C10 5 8 6.5 6.5 6 Z" fill="#1e1e1e"/></svg>
<div style="left:820.4px;top:62.1px;width:14.1px;height:16.2px;background:#fde8b6;border:1px solid #e5c365;"></div>
<div style="left:823px;top:69.5px;width:8.5px;height:1.6px;background:#1e1e1e;"></div>
<div style="left:827px;top:68.5px;width:5px;height:3px;background:#1e1e1e;"></div>
<div style="left:668px;top:80px;width:228px;height:13.4px;background:#ffffff;"></div>
<div style="left:668px;top:92.8px;width:228px;height:0.8px;background:#c5cde8;"></div>
<div class="t" style="left:670.65px;top:81.05px;font-size:8.5px;color:#717171;transform-origin:0 0;transform:scaleX(0.9122);">Search Solution Explorer (Ctrl+;)</div>
<svg style="position:absolute;left:879px;top:82.5px;" width="8" height="9" viewBox="0 0 8 9"><circle cx="4.8" cy="3.2" r="2.6" fill="none" stroke="#424242" stroke-width="1.1"/><path d="M3 5 L0.5 8" stroke="#424242" stroke-width="1.3"/></svg>
<svg style="position:absolute;left:891px;top:86px;" width="4" height="3" viewBox="0 0 4 3"><path d="M0 0 H4 L2 2.5 Z" fill="#424242"/></svg>
<div style="left:668px;top:94.8px;width:228px;height:11.6px;background:#e6e7ed;"></div>
<svg style="position:absolute;left:677px;top:95.5px;" width="11" height="11" viewBox="0 0 11 11"><rect x="2.5" y="0.5" width="8" height="8.5" fill="#f5f5f5" stroke="#424242"/><rect x="2.5" y="0.5" width="8" height="1.8" fill="#424242"/><path transform="translate(-2.8,3.2) scale(0.45)" d="M5.8 5.8 L7.6 5.2 L11.2 8.6 L16 3 L19.1 4.3 V14.7 L16 16 L11.2 10.4 L7.6 13.8 L5.8 13.2 Z M7.6 7.6 V11.4 L9.8 9.5 Z M12.6 9.5 L15.8 12.2 V6.8 Z" fill="#8550d0" fill-rule="evenodd"/></svg>
<div class="t" style="left:690.55px;top:95.15px;font-size:8.5px;color:#1e1e1e;transform-origin:0 0;transform:scaleX(0.9219);">Solution &#x27;ElmSharpTemplate1&#x27; (1 of 1 project)</div>
<svg style="position:absolute;left:675px;top:110.5px;" width="4" height="4" viewBox="0 0 4 4"><path d="M4 0 V4 H0 Z" fill="#1e1e1e"/></svg>
<svg style="position:absolute;left:689px;top:108px;" width="10" height="10" viewBox="0 0 10 10"><rect x="0.5" y="0.5" width="9" height="8.5" rx="0.5" fill="#f5f5f5" stroke="#388a34"/><text x="1.6" y="6.8" font-family="Liberation Sans" font-size="5" font-weight="bold" fill="#424242">C#</text></svg>
<div class="t" style="left:702.40px;top:107.05px;font-size:8.5px;color:#1e1e1e;font-weight:bold;transform-origin:0 0;transform:scaleX(0.9013);">ElmSharpTemplate1</div>
<svg style="position:absolute;left:687px;top:121.5px;" width="4" height="7" viewBox="0 0 4 7"><path d="M0.5 0.5 L3.5 3.5 L0.5 6.5 Z" fill="none" stroke="#1e1e1e" stroke-width="0.9"/></svg>
<svg style="position:absolute;left:701px;top:120.5px;" width="10" height="9" viewBox="0 0 10 9"><rect x="6.5" y="1" width="2.6" height="2.6" fill="#1e1e1e"/><rect x="5.5" y="5.2" width="3" height="3" fill="#1e1e1e"/><rect x="0.8" y="5.8" width="2" height="2" fill="#1e1e1e"/><rect x="3.6" y="2" width="1.6" height="1.6" fill="#1e1e1e"/></svg>
<div class="t" style="left:714.18px;top:119.05px;font-size:8.5px;color:#1e1e1e;transform-origin:0 0;transform:scaleX(0.9086);">Dependencies</div>
<svg style="position:absolute;left:701px;top:133.4px;" width="10" height="8" viewBox="0 0 10 8"><path d="M0 0.5 H3.5 L4.5 1.5 H10 V8 H0 Z" fill="#dcb67a"/></svg>
<div class="t" style="left:714.22px;top:131.25px;font-size:8.5px;color:#1e1e1e;transform-origin:0 0;transform:scaleX(1.0516);">lib</div>
<svg style="position:absolute;left:701px;top:145.3px;" width="10" height="8" viewBox="0 0 10 8"><path d="M0 0.5 H3.5 L4.5 1.5 H10 V8 H0 Z" fill="#dcb67a"/></svg>
<div class="t" style="left:714.30px;top:143.15px;font-size:8.5px;color:#1e1e1e;transform-origin:0 0;transform:scaleX(0.9120);">res</div>
<svg style="position:absolute;left:701px;top:157.2px;" width="10" height="8" viewBox="0 0 10 8"><path d="M0 0.5 H3.5 L4.5 1.5 H10 V8 H0 Z" fill="#dcb67a"/></svg>
<div class="t" style="left:714.60px;top:155.05px;font-size:8.5px;color:#1e1e1e;transform-origin:0 0;transform:scaleX(0.9269);">shared</div>
<svg style="position:absolute;left:687px;top:157.7px;" width="4" height="7" viewBox="0 0 4 7"><path d="M0.5 0.5 L3.5 3.5 L0.5 6.5 Z" fill="none" stroke="#1e1e1e" stroke-width="0.9"/></svg>
<svg style="position:absolute;left:687px;top:169.6px;" width="4" height="7" viewBox="0 0 4 7"><path d="M0.5 0.5 L3.5 3.5 L0.5 6.5 Z" fill="none" stroke="#1e1e1e" stroke-width="0.9"/></svg>
<svg style="position:absolute;left:701px;top:169.5px;" width="11" height="7" viewBox="0 0 11 7"><text x="0" y="6" font-family="Liberation Sans" font-size="7" font-weight="bold" fill="#388a34">C</text><text x="5" y="4.5" font-family="Liberation Sans" font-size="4.5" font-weight="bold" fill="#388a34">#</text></svg>
<div class="t" style="left:713.79px;top:166.95px;font-size:8.5px;color:#1e1e1e;transform-origin:0 0;transform:scaleX(0.9003);">ElmSharpTemplate1_App.cs</div>
<svg style="position:absolute;left:701px;top:180px;" width="10" height="10" viewBox="0 0 10 10"><path d="M2.5 0.5 H7 L9.5 3 V9.5 H2.5 Z" fill="#f5f5f5" stroke="#424242"/><circle cx="2.5" cy="8" r="2" fill="#1e1e1e"/></svg>
<div class="t" style="left:714.28px;top:178.85px;font-size:8.5px;color:#1e1e1e;transform-origin:0 0;transform:scaleX(0.9707);">tizen-manifest.xml</div>
<svg style="position:absolute;left:2px;top:469px;" width="10" height="8" viewBox="0 0 10 8"><path d="M2.5 0.5 H9.5 L7.5 7.5 H0.5 Z" fill="none" stroke="#ffffff" stroke-width="1"/></svg>
<div class="t" style="left:15.99px;top:466.85px;font-size:8.5px;color:#ffffff;transform-origin:0 0;transform:scaleX(0.8918);">Ready</div>
<svg style="position:absolute;left:762.5px;top:469px;" width="7" height="8" viewBox="0 0 7 8"><path d="M3.2 8 V1.2 M0.6 3.8 L3.2 1.2 L5.8 3.8" fill="none" stroke="#ffffff" stroke-width="1.4"/></svg>
<div class="t" style="left:774.80px;top:467.55px;font-size:8.5px;color:#ffffff;transform-origin:0 0;transform:scaleX(0.9392);">Add to Source Control</div>
<svg style="position:absolute;left:857px;top:470.5px;" width="5" height="4" viewBox="0 0 5 4"><path d="M0 3.5 L2.5 0.5 L5 3.5 Z" fill="#ffffff"/></svg>
<svg style="position:absolute;left:875px;top:466.5px;" width="16" height="14" viewBox="0 0 16 14"><path d="M2.5 9.5 C2.5 5 3 2 6.5 1.5 C10 2 10.5 5 10.5 9.5 Z M1.5 9.5 H11.5" fill="#dcdcdc" stroke="#dcdcdc" stroke-width="1"/><circle cx="6.5" cy="11.2" r="1.3" fill="#dcdcdc"/><circle cx="10.2" cy="8.3" r="4" fill="#e51400"/><text x="8.5" y="10.5" font-family="Liberation Sans" font-size="6" font-weight="bold" fill="#fff">3</text></svg>
</body></html>
